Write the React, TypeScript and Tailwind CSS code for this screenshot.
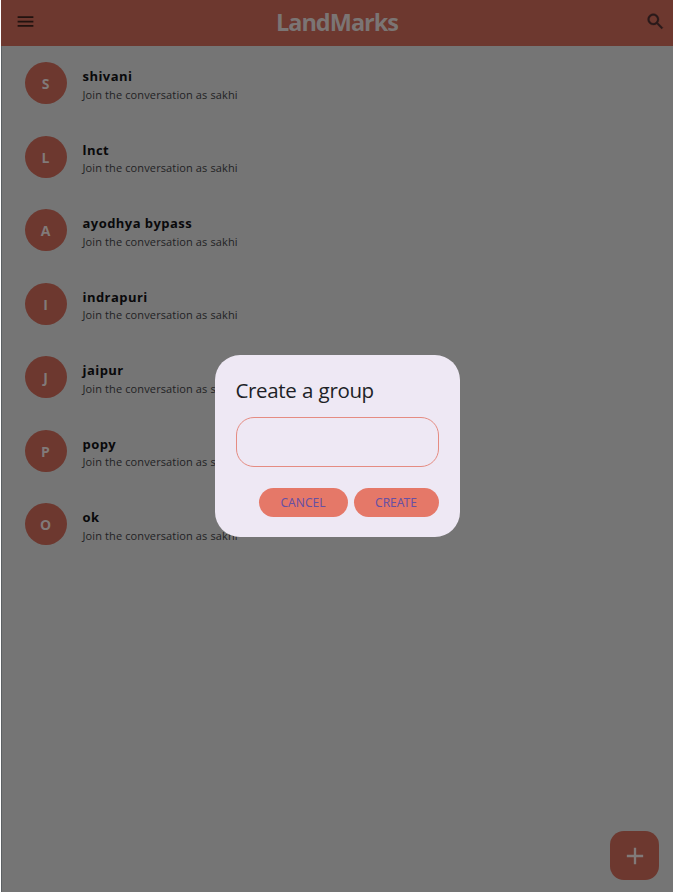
import React from "react";

const groups = ["shivani", "lnct", "ayodhya bypass", "indrapuri", "jaipur", "popy", "ok"];

function Header() {
  return (
    <header className="flex h-[46px] shrink-0 items-start justify-between bg-[#6d382f] pl-[14px] pr-[7px]">
      <svg className="mt-[11px] h-[21px] w-[21px]" viewBox="0 0 24 24" fill="#21120f">
        <path d="M3 18h18v-2H3v2zm0-5h18v-2H3v2zm0-7v2h18V6H3z" />
      </svg>
      <h1 className="mr-[7px] mt-[7px] text-[23.5px] leading-[30px] font-bold tracking-[-1px] text-[#7b7574]">LandMarks</h1>
      <svg className="mt-[11px] h-[21px] w-[21px]" viewBox="0 0 24 24" fill="#29191a" stroke="#29191a" strokeWidth="0.4">
        <path d="M15.5 14h-.79l-.28-.27C15.41 12.59 16 11.11 16 9.5 16 5.91 13.09 3 9.5 3S3 5.91 3 9.5 5.91 16 9.5 16c1.61 0 3.09-.59 4.23-1.57l.27.28v.79l5 4.99L20.49 19l-4.99-5zm-6 0C7.01 14 5 11.99 5 9.5S7.01 5 9.5 5 14 7.01 14 9.5 11.99 14 9.5 14z" />
      </svg>
    </header>
  );
}

function GroupRow({ name }: { name: string }) {
  return (
    <li className="flex h-[73.5px] items-start gap-[16px]">
      <div className="flex h-[42px] w-[42px] items-center justify-center rounded-full bg-[#6d382f] pt-px text-[14px] font-bold text-[#817a79]">
        {name[0].toUpperCase()}
      </div>
      <div className="pt-[5px]">
        <p className="text-[13px] leading-[18px] font-bold tracking-[0.45px] text-[#09090b]">{name}</p>
        <p className="mt-[0.75px] text-[11px] leading-[18px] tracking-[0.12px] whitespace-nowrap text-[#222224]">
          Join the conversation as sakhi
        </p>
      </div>
    </li>
  );
}

function CreateDialog() {
  return (
    <div className="absolute left-[213.5px] top-[354.5px] flex h-[182px] w-[245px] flex-col rounded-[25px] bg-[#eee8f4] px-[21px] pt-[20.5px]">
      <h2 className="text-[20.5px] leading-[30px] tracking-[-0.35px] [word-spacing:0.6px] text-[#201f27]">Create a group</h2>
      <input className="mt-[12px] h-[50px] w-full rounded-[18px] border border-[#e58c82] bg-transparent px-3 outline-none" />
      <div className="mt-[20.5px] flex justify-end gap-[6px] font-['Noto_Sans',sans-serif]">
        <button className="h-[29px] w-[89px] rounded-full bg-[#e57868] pt-px text-[12px] text-[#6750a4]">CANCEL</button>
        <button className="h-[29px] w-[85px] rounded-full bg-[#e57868] pt-px text-[12px] text-[#6750a4]">CREATE</button>
      </div>
    </div>
  );
}

export default function App() {
  return (
    <div className="h-[892px] w-[675px] overflow-hidden bg-white pl-px pr-[2px] font-['Open_Sans','Noto_Sans',sans-serif]">
      <div className="relative flex h-full flex-col bg-[#757575]">
        <Header />
        <ul className="flex-1 border-l border-[#5c6063] pl-[22.5px] pt-[16px]">
          {groups.map((name) => (
            <GroupRow key={name} name={name} />
          ))}
        </ul>
        <button className="absolute left-[609px] top-[831px] flex h-[49px] w-[49px] items-center justify-center rounded-[14px] bg-[#6d382f]">
          <svg className="h-[28px] w-[28px]" viewBox="0 0 24 24" fill="#817a79">
            <path d="M19 13h-6v6h-2v-6H5v-2h6V5h2v6h6v2z" />
          </svg>
        </button>
        <CreateDialog />
      </div>
    </div>
  );
}
